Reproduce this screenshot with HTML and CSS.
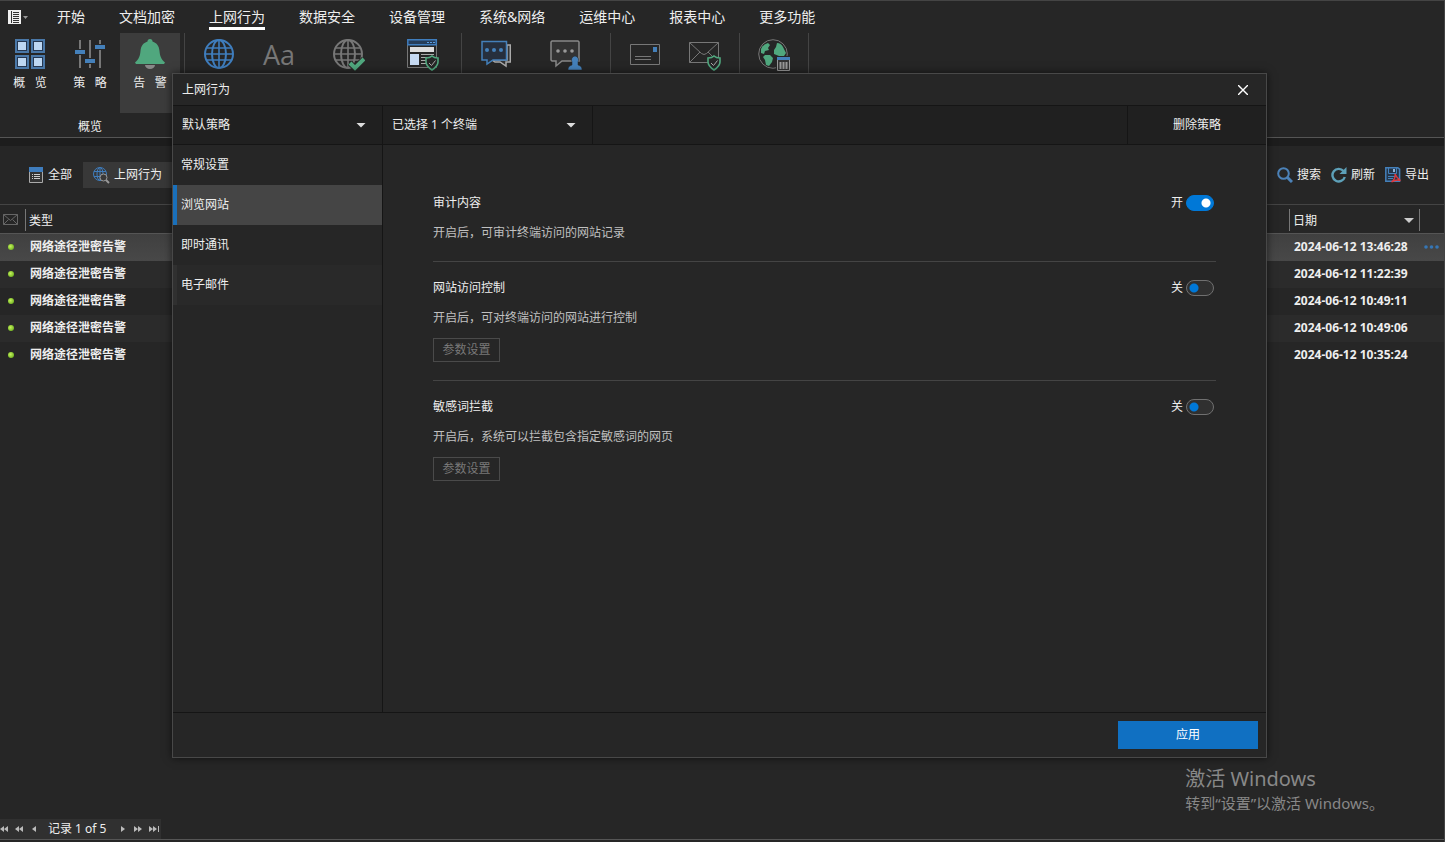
FILE: index.html
```html
<!DOCTYPE html>
<html lang="zh-CN">
<head>
<meta charset="utf-8">
<title>上网行为</title>
<link rel="stylesheet" href="styles.css">
</head>
<body>
<div class="app">
  <header class="menubar">
    <button class="file-menu" aria-label="菜单">
      <svg width="20" height="14" viewBox="0 0 20 14"><path fill="#f0f0f0" d="M0 0h13v14H0z"/><path stroke="#333" d="M3.500 1v12M5 2.500h6M5 4.500h6M5 6.500h6M5 8.500h6M5 10.500h6M5 12.500h6"/><path fill="#999" d="M15 6h5l-2.500 3z"/></svg>
    </button>
    <nav class="tabs">
      <a href="#">开始</a><a href="#">文档加密</a><a href="#" class="active">上网行为</a><a href="#">数据安全</a><a href="#">设备管理</a><a href="#">系统&amp;网络</a><a href="#">运维中心</a><a href="#">报表中心</a><a href="#">更多功能</a>
    </nav>
  </header>

  <section class="ribbon">
    <div class="group">
      <div class="tools">
        <button class="tool">
          <svg width="30" height="30" viewBox="0 0 30 30"><g fill="#263750" stroke="#4a78a8" stroke-width="2"><path d="M1 1h12v12H1zM17 1h12v12H17zM1 17h12v12H1zM17 17h12v12H17z"/></g><path fill="#bdd7f2" d="M3 3h8v8H3zM19 3h8v8h-8zM3 19h8v8H3zM19 19h8v8h-8z"/></svg>
          <span>概   览</span>
        </button>
        <button class="tool">
          <svg width="30" height="30" viewBox="0 0 30 30"><path stroke="#777" stroke-width="2" d="M5 1v28M15 1v28M25 1v28"/><path stroke="#262626" stroke-width="6" d="M0 13h10M10 22h10M20 8h10"/><path stroke="#4480ba" stroke-width="4" d="M0 13h10M10 22h10M20 8h10"/></svg>
          <span>策   略</span>
        </button>
        <button class="tool active">
          <svg width="30" height="30" viewBox="0 0 30 30"><path fill="#888" d="M10 26h10a5 4 0 0 1-10 0z"/><path fill="#50a77e" d="M15 0a2.500 2.500 0 0 1 2.500 2.500C22 4 24 7 24.500 12c.5 5 1.500 8 5.500 11.500l-1 1.500H1l-1-1.500C4 20 5 17 5.500 12 6 7 8 4 12.500 2.500A2.500 2.500 0 0 1 15 0z"/></svg>
          <span>告   警</span>
        </button>
      </div>
      <div class="group-name">概览</div>
    </div>
    <div class="group">
      <div class="tools">
        <button class="tool" aria-label="网站">
          <svg width="30" height="30" viewBox="0 0 30 30" fill="none" stroke="#3f7dbd" stroke-width="2"><circle cx="15" cy="15" r="14"/><ellipse cx="15" cy="15" rx="7" ry="14"/><path d="M15 1v28M2.500 9h25M1 15h28M2.500 21h25" stroke-width="1.600"/></svg>
        </button>
        <button class="tool" aria-label="敏感词">
          <span class="glyph-aa">Aa</span>
        </button>
        <button class="tool wide" aria-label="网站许可">
          <svg width="32" height="32" viewBox="0 0 32 32" fill="none" stroke="#777" stroke-width="2"><circle cx="15" cy="15" r="14"/><ellipse cx="15" cy="15" rx="7" ry="14"/><path d="M15 1v28M2.500 9h25M1 15h28M2.500 21h25" stroke-width="1.600"/><path stroke="#262626" stroke-width="6" d="M17 24l5 5L31 20"/><path stroke="#50a77e" stroke-width="4" d="M17 24l5 5L31 20"/></svg>
        </button>
        <button class="tool medium" aria-label="网页防护">
          <svg width="32" height="32" viewBox="0 0 32 32" fill="none"><path stroke="#777" d="M.5 6v22.500h29V6"/><path fill="#263d59" stroke="#3f7dbd" stroke-width="1.500" d="M.8 .8h28.500v5H.8z"/><path stroke="#5c9ee0" d="M20 3.500h2M23 3.500h2M26 3.500h2"/><path fill="#ddd" d="M3 8h24v5H3z"/><path fill="#c6daf3" d="M3 15h9v11H3z"/><path stroke="#aaa" d="M14 15.500h13M14 18.500h6M14 21.500h5M14 24.500h5"/><path fill="#262626" stroke="#50a77e" stroke-width="1.600" d="M25 17c2 2 4 2 6 2v4c0 4-3 6-6 8-3-2-6-4-6-8v-4c2 0 4 0 6-2z"/><path stroke="#aaa" d="M22 24l2.500 2.500 4-5"/></svg>
        </button>
      </div>
    </div>
    <div class="group">
      <div class="tools">
        <button class="tool" aria-label="聊天">
          <svg width="30" height="30" viewBox="0 0 30 30" fill="none" stroke-width="1.500"><path fill="#333" stroke="#aaa" d="M26 6h3.300v17H25v4l-6-4h-5l-3-2h15z"/><path fill="#262f3d" stroke="#4480ba" d="M1 2.500h24.500v18.500H12l-6 4v-4H1z"/><g fill="#4480ba"><circle cx="6" cy="11" r="2"/><circle cx="13" cy="11" r="2"/><circle cx="20" cy="11" r="2"/></g></svg>
        </button>
        <button class="tool wide" aria-label="聊天帐号">
          <svg width="32" height="32" viewBox="0 0 32 32"><path fill="#333" stroke="#888" stroke-width="1.500" d="M2 2h26l1 1v19H12l-6 5v-5H2l-1-1V3z"/><g fill="#999"><circle cx="8" cy="12" r="1.800"/><circle cx="15" cy="12" r="1.800"/><circle cx="22" cy="12" r="1.800"/></g><path fill="#4480ba" stroke="#262626" stroke-width=".5" d="M25 17a4 4 0 0 1 3 6v3c3 1 4 2 4 5H18c0-3 1-4 4-5v-3a4 4 0 0 1 3-6z"/></svg>
        </button>
      </div>
    </div>
    <div class="group">
      <div class="tools">
        <button class="tool" aria-label="邮件">
          <svg width="30" height="30" viewBox="0 0 30 30"><path fill="none" stroke="#777" d="M.5 5.500h29v20H.5z"/><path fill="#4480ba" d="M23 8h4v5h-4z"/><path stroke="#777" d="M5 17.500h16M5 20.500h16"/></svg>
        </button>
        <button class="tool" aria-label="邮件防护">
          <svg width="32" height="32" viewBox="0 0 32 32" fill="none"><path stroke="#777" d="M.5 3.500h29v20H.5zM.5 3.500l12 11q2.500 2 5 0l12-11M.5 23.500L11 13M29.500 23.500L19 13"/><path fill="#262626" stroke="#50a77e" stroke-width="1.600" d="M25 17c2 2 4 2 6 2v4c0 4-3 6-6 8-3-2-6-4-6-8v-4c2 0 4 0 6-2z"/><path stroke="#aaa" d="M22 24l2.500 2.500 4-5"/></svg>
        </button>
      </div>
    </div>
    <div class="group">
      <div class="tools">
        <button class="tool" aria-label="流量">
          <svg width="32" height="32" viewBox="0 0 32 32"><circle cx="15" cy="15" r="14.300" fill="none" stroke="#777"/><path fill="#50a77e" d="M3 10q2-5 7-6l2 2-2 3 1 2-4 1-1 3-3-1zM7 16l5 0 3 3-1 4-3 4-3-1-1-5-2-3zM19 4q4 0 6 4l3 6-2 3h-5l-5-2v-4l2-3z"/><path fill="#262626" d="M18 17h14v15H18z"/><path fill="#333" stroke="#999" d="M19.500 20.500h12v11h-12z"/><path fill="#4480ba" d="M19 18h13v3H19z"/><path stroke="#999" stroke-width="2" d="M22.500 23v7M25.500 23v7M28.500 23v7"/></svg>
        </button>
      </div>
    </div>
  </section>

  <main class="workspace">
    <div class="toolbar">
      <button class="filter">
        <svg width="15" height="16" viewBox="0 0 15 16"><path fill="#333" stroke="#aaa" d="M.5 .5h13v15H.5z"/><path fill="#3f7dbd" d="M0 0h14v5H0z"/><path stroke="#ccc" d="M3 7.500h1M5 7.500h6M3 9.500h1M5 9.500h6M3 11.500h1M5 11.500h6"/></svg>
        <span>全部</span>
      </button>
      <button class="filter active">
        <svg width="17" height="17" viewBox="0 0 17 17" fill="none"><g stroke="#3f7dbd"><circle cx="7" cy="7" r="6.500"/><ellipse cx="7" cy="7" rx="3" ry="6.500"/><path d="M1 4.500h12M1 9.500h12M7 1v13"/></g><circle cx="10.500" cy="10.500" r="3.500" fill="#383838" stroke="#999"/><path stroke="#999" stroke-width="2" d="M13 13l3 3"/></svg>
        <span>上网行为</span>
      </button>
      <div class="actions">
        <button class="action"><svg width="16" height="16" viewBox="0 0 16 16" fill="none" stroke="#4c82b8"><circle cx="6.500" cy="6.500" r="5.300" stroke-width="2"/><path stroke-width="3" d="M10.500 10.500l4.500 4.500"/></svg><span>搜索</span></button>
        <button class="action"><svg width="16" height="16" viewBox="0 0 16 16"><path fill="none" stroke="#5da0b8" stroke-width="2.400" d="M12.500 4A6.300 6.300 0 1 0 13.800 10"/><path fill="#5da0b8" d="M15.500 0v7h-7z"/></svg><span>刷新</span></button>
        <button class="action"><svg width="16" height="16" viewBox="0 0 16 16" fill="none"><path fill="#24364a" stroke="#4480ba" stroke-width="1.500" d="M.8 .8h12l1.800 1.400v12H.8z"/><path stroke="#4480ba" d="M3.500 1v5.500h8V1M3 9.500h7M3 11.500h5"/><path fill="#8fb4d8" d="M8 2h2v3H8z"/><path stroke="#e0393e" stroke-width="1.400" d="M10 7q2 4.500 5.500 6.500-4-1.500-9 1.500Q11 11.500 10 7"/></svg><span>导出</span></button>
      </div>
    </div>

    <table class="alerts">
      <colgroup><col class="col-state"><col><col class="col-date"><col class="col-more"></colgroup>
      <thead>
        <tr>
          <th><svg width="15" height="11" viewBox="0 0 15 11"><path fill="none" stroke="#666" d="M.5 .5h14v10H.5zM.5 .5l7 6 7-6M.5 10.500l5-5M14.500 10.500l-5-5"/></svg></th>
          <th class="split">类型</th>
          <th class="split"><div class="sort">日期<span class="caret"></span></div></th>
          <th class="split"></th>
        </tr>
      </thead>
      <tbody>
        <tr class="selected"><td><i class="dot"></i></td><td>网络途径泄密告警</td><td>2024-06-12 13:46:28</td><td><button class="more" aria-label="更多"><svg width="15" height="4" viewBox="0 0 15 4" fill="#3676b5"><circle cx="2" cy="2" r="1.800"/><circle cx="7.500" cy="2" r="1.800"/><circle cx="13" cy="2" r="1.800"/></svg></button></td></tr>
        <tr><td><i class="dot"></i></td><td>网络途径泄密告警</td><td>2024-06-12 11:22:39</td><td></td></tr>
        <tr><td><i class="dot"></i></td><td>网络途径泄密告警</td><td>2024-06-12 10:49:11</td><td></td></tr>
        <tr><td><i class="dot"></i></td><td>网络途径泄密告警</td><td>2024-06-12 10:49:06</td><td></td></tr>
        <tr><td><i class="dot"></i></td><td>网络途径泄密告警</td><td>2024-06-12 10:35:24</td><td></td></tr>
      </tbody>
    </table>

    <footer class="pager">
      <button aria-label="首页"><svg width="8" height="6" viewBox="0 0 8 6"><path d="M4 0v6L0 3zM8 0v6L4 3z"/></svg></button>
      <button aria-label="后退多页"><svg width="8" height="6" viewBox="0 0 8 6"><path d="M4 0v6L0 3zM8 0v6L4 3z"/></svg></button>
      <button aria-label="上一页"><svg width="8" height="6" viewBox="0 0 8 6"><path d="M6 0v6L2 3z"/></svg></button>
      <span>记录 1 of 5</span>
      <button aria-label="下一页"><svg width="8" height="6" viewBox="0 0 8 6"><path d="M2 0v6l4-3z"/></svg></button>
      <button aria-label="前进多页"><svg width="8" height="6" viewBox="0 0 8 6"><path d="M0 0v6l4-3zM4 0v6l4-3z"/></svg></button>
      <button aria-label="末页"><svg width="10" height="6" viewBox="0 0 10 6"><path d="M0 0v6l4-3zM4 0v6l4-3zM9 0h1v6H9z"/></svg></button>
    </footer>
  </main>

  <aside class="activation">
    <div class="activation-title">激活 Windows</div>
    <div>转到“设置”以激活 Windows。</div>
  </aside>

  <div class="dialog" role="dialog" aria-labelledby="dialog-title">
    <header class="dialog-head">
      <h2 id="dialog-title">上网行为</h2>
      <button class="close" aria-label="关闭"><svg width="10" height="10" viewBox="0 0 10 10"><path stroke="#fff" stroke-width="1.400" d="M0 0l10 10M10 0L0 10"/></svg></button>
    </header>
    <div class="dialog-bar">
      <div class="picker"><select aria-label="策略"><option>默认策略</option></select><span class="caret"></span></div>
      <div class="picker"><select aria-label="终端"><option>已选择 1 个终端</option></select><span class="caret"></span></div>
      <button class="delete">删除策略</button>
    </div>
    <div class="dialog-body">
      <nav class="side">
        <a href="#">常规设置</a>
        <a href="#" class="active">浏览网站</a>
        <a href="#">即时通讯</a>
        <a href="#" class="hover">电子邮件</a>
      </nav>
      <div class="settings">
        <section class="setting">
          <div class="setting-head"><h3>审计内容</h3><label class="switch">开<input type="checkbox" checked></label></div>
          <p>开启后，可审计终端访问的网站记录</p>
        </section>
        <section class="setting">
          <div class="setting-head"><h3>网站访问控制</h3><label class="switch">关<input type="checkbox"></label></div>
          <p>开启后，可对终端访问的网站进行控制</p>
          <button class="params" disabled>参数设置</button>
        </section>
        <section class="setting">
          <div class="setting-head"><h3>敏感词拦截</h3><label class="switch">关<input type="checkbox"></label></div>
          <p>开启后，系统可以拦截包含指定敏感词的网页</p>
          <button class="params" disabled>参数设置</button>
        </section>
      </div>
    </div>
    <footer class="dialog-foot"><button class="apply">应用</button></footer>
  </div>
</div>
</body>
</html>
```
FILE: styles.css
```css
* { box-sizing: border-box; }

body {
  margin: 0;
  background: #262626;
  color: #eee;
  font: 12px/20px "Noto Sans", "Noto Sans CJK SC", sans-serif;
}

button, select {
  margin: 0;
  padding: 0;
  border: 0;
  background: none;
  color: inherit;
  font: inherit;
}

a { color: inherit; text-decoration: none; }
h2, h3, p { margin: 0; font-size: 12px; font-weight: 400; }
svg { display: block; flex: none; }

.app {
  position: relative;
  display: flex;
  flex-direction: column;
  min-height: 100vh;
  border-top: 1px solid #444;
  border-right: 1px solid #444;
}

/* Menu bar */
.menubar { display: flex; height: 32px; }
.file-menu { padding: 0 8px; width: 40px; }
.tabs { display: flex; gap: 34px; padding-left: 17px; font-size: 14px; }
.tabs a { height: 29px; padding-top: 6px; border-bottom: 3px solid transparent; }
.tabs .active { border-color: #fff; }

/* Ribbon */
.ribbon { display: flex; height: 105px; border-bottom: 1px solid #555; }
.group {
  display: flex;
  flex-direction: column;
  justify-content: space-between;
  padding: 0 4px;
  border-right: 1px solid #444;
}
.group:first-child { padding-left: 0; }
.tools { display: flex; }
.tool {
  display: flex;
  flex-direction: column;
  align-items: center;
  gap: 4px;
  width: 60px;
  height: 80px;
  padding-top: 6px;
  white-space: pre;
}
.tool.wide { width: 80px; }
.tool.medium { width: 68px; }
.tool.active { background: #3c3c3c; }
.group-name { text-align: center; }
.glyph-aa { color: #777; font: 27px/32px "Open Sans", sans-serif; }

/* Workspace */
.workspace {
  display: flex;
  flex: 1;
  flex-direction: column;
  border-top: 8px solid #1d1d1d;
  border-bottom: 1px solid #555;
  margin-bottom: 2px;
}
.toolbar { display: flex; align-items: center; gap: 1px; height: 58px; padding: 0 15px 0 19px; }
.filter, .action { display: flex; align-items: center; gap: 4px; }
.filter { height: 26px; padding: 0 10px; }
.filter.active { background: #383838; }
.actions { display: flex; gap: 10px; margin-left: auto; }

.alerts { width: 100%; border-collapse: collapse; table-layout: fixed; }
.col-state { width: 25px; }
.col-date { width: 130px; }
.col-more { width: 25px; }
.alerts tr { height: 27px; }
.alerts th { padding: 3px 4px 0; font-weight: 400; text-align: left; }
.alerts th:first-child { padding: 0 3px; }
.alerts thead tr { height: 29px; border-top: 1px solid #444; border-bottom: 1px solid #555; }
.alerts .split { background: linear-gradient(#777, #777) 0 4px / 1px 22px no-repeat; }
.alerts td { padding: 0 5px; font-weight: 700; }
.alerts td:first-child { padding-left: 8px; }
.alerts tbody tr:nth-child(even) { background: #2b2b2b; }
.alerts .selected { background: linear-gradient(#404040, #484848); }
.sort { display: flex; align-items: center; justify-content: space-between; padding-right: 1px; }
.caret { width: 10px; height: 5px; background: #ccc; clip-path: polygon(0 0, 100% 0, 50% 100%); }
.dot { display: block; width: 6px; height: 6px; border-radius: 50%; background: radial-gradient(circle at 40% 40%, #c5f25c, #58a010); }
.more { display: block; }

.pager {
  display: flex;
  align-items: center;
  align-self: flex-start;
  gap: 7px;
  height: 20px;
  margin-top: auto;
  padding-right: 2px;
  background: #303030;
}
.pager svg { fill: #bbb; }
.pager span { padding: 0 6px 0 3px; }

.activation {
  position: absolute;
  right: 60px;
  bottom: 28px;
  color: #888;
  font-size: 15px;
  line-height: 22px;
}
.activation-title { font-size: 20px; line-height: 26px; }

/* Dialog */
.dialog {
  position: absolute;
  inset: 72px 177px 84px 172px;
  display: flex;
  flex-direction: column;
  border: 1px solid #484848;
  background: #262626;
  box-shadow: 0 0 8px rgba(0, 0, 0, .6);
}
.dialog-head {
  display: flex;
  align-items: center;
  justify-content: space-between;
  height: 31px;
  padding: 0 18px 0 9px;
}
.dialog-bar { display: flex; height: 40px; border: solid #151515; border-width: 1px 0; background: #202020; }
.picker { display: grid; grid-template-columns: 1fr auto; align-items: center; width: 210px; border-right: 1px solid #151515; }
.picker select { grid-area: 1 / 1 / 2 / 3; height: 100%; padding: 0 9px; appearance: none; }
.picker .caret { grid-area: 1 / 2; margin-right: 16px; background: #ddd; pointer-events: none; }
.delete { width: 139px; margin-left: auto; border-left: 1px solid #151515; }
.dialog-body { display: flex; flex: 1; }
.side { width: 210px; border-right: 1px solid #151515; }
.side a { display: flex; align-items: center; height: 40px; padding-left: 4px; border-left: 4px solid transparent; }
.side .active { border-color: #1a70bb; background: #454545; }
.side .hover { border-color: #303030; background: #292929; }
.settings { flex: 1; padding: 32px 50px; }
.setting { padding: 16px 0 18px; border-bottom: 1px solid #444; }
.setting:last-child { border: 0; }
.setting-head { display: flex; justify-content: space-between; padding-right: 2px; margin-bottom: 10px; }
.setting p { color: #c0c0c0; }
.switch { display: flex; align-items: center; gap: 3px; }
.switch input {
  appearance: none;
  width: 28px;
  height: 16px;
  margin: 0;
  border: 1px solid #707070;
  border-radius: 8px;
  background: radial-gradient(circle at 7px 7px, #0078d7 4px, transparent 5px) #303030;
}
.switch input:checked {
  border-color: #0078d7;
  background: radial-gradient(circle at 19px 7px, #fff 4px, transparent 5px) #0078d7;
}
.params { width: 67px; height: 24px; margin-top: 10px; border: 1px solid #4a4a4a; color: #787878; }
.dialog-foot { display: flex; justify-content: flex-end; padding: 8px; border-top: 1px solid #151515; }
.apply { width: 140px; height: 28px; background: #1070c2; color: #fff; }
```
